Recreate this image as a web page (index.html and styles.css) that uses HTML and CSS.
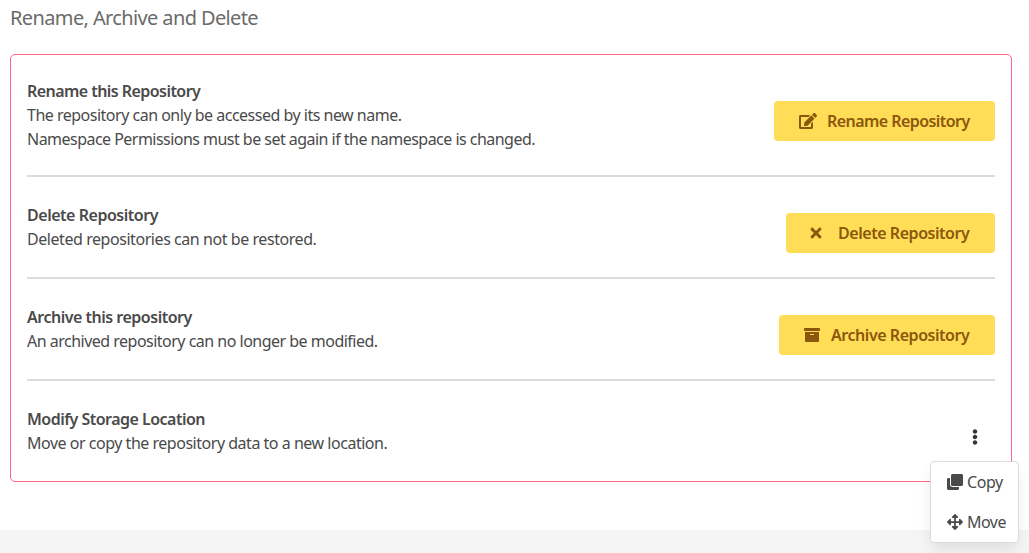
FILE: index.html
```html
<!DOCTYPE html>
<html lang="en">
<head>
<meta charset="utf-8">
<title>Repository settings</title>
<link rel="stylesheet" href="styles.css">
</head>
<body>
<main class="page">
  <h2 class="heading"><span class="t0">Rename, Archive and Delete</span></h2>
  <section class="danger-zone">
    <div class="row">
      <div class="info"><strong class="t1">Rename this Repository</strong><p><span class="t2">The repository can only be accessed by its new name.</span><br><span class="t3">Namespace Permissions must be set again if the namespace is changed.</span></p></div>
      <button class="button"><span class="icon"><svg width="18" height="16" viewBox="0 0 576 512"><path d="M402.6 83.2l90.2 90.2c3.8 3.8 3.8 10 0 13.8L274.4 405.6l-92.8 10.3c-12.4 1.4-22.9-9.1-21.5-21.5l10.3-92.8L388.8 83.2c3.8-3.8 10-3.8 13.8 0zm162-22.9l-48.8-48.8c-15.2-15.2-39.9-15.2-55.2 0l-35.4 35.4c-3.8 3.8-3.8 10 0 13.8l90.2 90.2c3.8 3.8 10 3.8 13.8 0l35.4-35.4c15.2-15.3 15.2-40 0-55.2zM384 346.2V448H64V128h229.8c3.2 0 6.2-1.3 8.5-3.5l40-40c7.6-7.6 2.2-20.5-8.5-20.5H48C21.5 64 0 85.5 0 112v352c0 26.5 21.5 48 48 48h352c26.5 0 48-21.5 48-48V306.2c0-10.7-12.9-16-20.5-8.5l-40 40c-2.2 2.3-3.5 5.3-3.5 8.5z"/></svg></span><span class="t4">Rename Repository</span></button>
    </div>
    <hr class="divider first">
    <div class="row">
      <div class="info"><strong class="t5">Delete Repository</strong><p><span class="t6">Deleted repositories can not be restored.</span></p></div>
      <button class="button delete"><span class="icon"><svg width="12" height="16" viewBox="-16 0 384 512"><path d="M242.7 256l100.1-100.1c12.3-12.3 12.3-32.2 0-44.5l-22.2-22.2c-12.3-12.3-32.2-12.3-44.5 0L176 189.300 75.900 89.200c-12.300-12.300-32.200-12.300-44.500 0L9.200 111.500c-12.300 12.300-12.300 32.200 0 44.500L109.300 256 9.200 356.100c-12.300 12.300-12.300 32.200 0 44.500l22.200 22.200c12.300 12.300 32.200 12.300 44.500 0L176 322.700l100.100 100.100c12.300 12.300 32.200 12.300 44.500 0l22.200-22.200c12.300-12.300 12.300-32.200 0-44.500L242.700 256z"/></svg></span><span class="t7">Delete Repository</span></button>
    </div>
    <hr class="divider">
    <div class="row">
      <div class="info"><strong class="t8">Archive this repository</strong><p><span class="t9">An archived repository can no longer be modified.</span></p></div>
      <button class="button archive"><span class="icon"><svg width="16" height="16" viewBox="0 0 512 512"><path d="M32 448c0 17.700 14.300 32 32 32h384c17.700 0 32-14.300 32-32V160H32v288zm160-212c0-6.600 5.400-12 12-12h104c6.600 0 12 5.400 12 12v8c0 6.600-5.400 12-12 12H204c-6.600 0-12-5.400-12-12v-8zM480 32H32C14.300 32 0 46.300 0 64v48c0 8.800 7.200 16 16 16h480c8.800 0 16-7.200 16-16V64c0-17.700-14.300-32-32-32z"/></svg></span><span class="t10">Archive Repository</span></button>
    </div>
    <hr class="divider">
    <div class="row">
      <div class="info"><strong class="t11">Modify Storage Location</strong><p><span class="t12">Move or copy the repository data to a new location.</span></p></div>
      <div class="dropdown">
        <button class="trigger" aria-label="Storage actions"><svg width="6" height="16" viewBox="0 0 192 512"><path d="M96 184c39.800 0 72 32.200 72 72s-32.200 72-72 72-72-32.200-72-72 32.200-72 72-72zM24 80c0 39.800 32.200 72 72 72s72-32.200 72-72S135.800 8 96 8 24 40.200 24 80zm0 352c0 39.800 32.200 72 72 72s72-32.200 72-72-32.200-72-72-72-72 32.200-72 72z"/></svg></button>
        <div class="menu">
          <div class="item"><svg width="16" height="16" viewBox="0 0 512 512"><path d="M464 0c26.510 0 48 21.490 48 48v288c0 26.510-21.490 48-48 48H176c-26.510 0-48-21.490-48-48V48c0-26.510 21.490-48 48-48h288M176 416c-44.112 0-80-35.888-80-80V128H48c-26.510 0-48 21.490-48 48v288c0 26.510 21.490 48 48 48h288c26.510 0 48-21.490 48-48v-48H176z"/></svg><span class="t13">Copy</span></div>
          <div class="item"><svg width="16" height="16" viewBox="0 0 512 512"><path d="M352.201 425.775l-79.196 79.196c-9.373 9.373-24.568 9.373-33.941 0l-79.196-79.196c-15.119-15.119-4.411-40.971 16.971-40.970h51.162L228 284H127.196v51.162c0 21.382-25.851 32.090-40.971 16.971L7.029 272.937c-9.373-9.373-9.373-24.569 0-33.941L86.225 159.800c15.119-15.119 40.971-4.411 40.971 16.971V228H228V127.196h-51.230c-21.382 0-32.090-25.851-16.971-40.971l79.196-79.196c9.373-9.373 24.568-9.373 33.941 0l79.196 79.196c15.119 15.119 4.411 40.971-16.971 40.971h-51.162V228h100.804v-51.162c0-21.382 25.851-32.090 40.970-16.971l79.196 79.196c9.373 9.373 9.373 24.569 0 33.941L425.773 352.200c-15.119 15.119-40.971 4.411-40.970-16.971V284H284v100.804h51.230c21.382 0 32.090 25.851 16.971 40.971z"/></svg><span class="t14">Move</span></div>
        </div>
      </div>
    </div>
  </section>
</main>
<footer class="footer"></footer>
</body>
</html>
```
FILE: styles.css
```css
* { box-sizing: border-box; }
body { margin: 0; background: #fff; font: 16px/24px "Noto Sans", sans-serif; color: #4a4a4a; }
.page { height: 530px; background: #fff; padding: 4px 17px 0 10px; }
.footer { height: 23px; background: #f5f5f5; }
.heading { margin: 0 0 22px; font-size: 20px; line-height: 28px; font-weight: 400; color: #6b6b6b; }
.danger-zone { border: 1px solid #ff6685; border-radius: 5px; padding: 24px 16px 14px; height: 428px; }
.row { display: flex; align-items: center; justify-content: space-between; }
.info { padding-bottom: 12px; white-space: nowrap; }
.info strong { display: block; font-weight: 600; }
.info p { margin: 0; }
.divider { height: 2px; border: 0; margin: 14px 0 26px; background: #dbdbdb; }
.divider.first { margin-top: 12px; }
.button { width: 221px; height: 40px; padding: 0 0 0 25px; border: 0; border-radius: 4px; background: #ffdd57; color: #8b570c; font: inherit; font-weight: 600; display: flex; align-items: center; white-space: nowrap; }
.button.delete { width: 209px; padding-left: 24px; }
.button.archive { width: 216px; }
.icon { width: 28px; display: flex; flex: none; }
.archive .icon { width: 27px; }
svg { display: block; fill: currentColor; flex: none; }
.dropdown { position: relative; width: 41px; }
.trigger { display: flex; justify-content: center; width: 41px; padding: 0; border: 0; background: none; color: #363636; }
.menu { position: absolute; top: 32px; right: -24px; width: 89px; height: 82px; border: 1px solid #dbdbdb; border-radius: 4px; background: #fff; box-shadow: 0 8px 16px -2px rgba(10,10,10,.1); z-index: 1; }
.item { display: flex; align-items: center; height: 40px; padding-left: 16px; gap: 4px; }
.t0 { letter-spacing: -.62px; }
.t1 { letter-spacing: -.55px; }
.t2 { letter-spacing: -.5px; }
.t3 { letter-spacing: -.53px; }
.t4 { letter-spacing: -.56px; }
.t5 { letter-spacing: -.47px; }
.t6 { letter-spacing: -.44px; }
.t7 { letter-spacing: -.45px; }
.t8 { letter-spacing: -.49px; }
.t9 { letter-spacing: -.51px; }
.t10 { letter-spacing: -.45px; }
.t11 { letter-spacing: -.52px; }
.t12 { letter-spacing: -.48px; }
.t13 { letter-spacing: -.4px; }
.t14 { letter-spacing: -.5px; }
```
